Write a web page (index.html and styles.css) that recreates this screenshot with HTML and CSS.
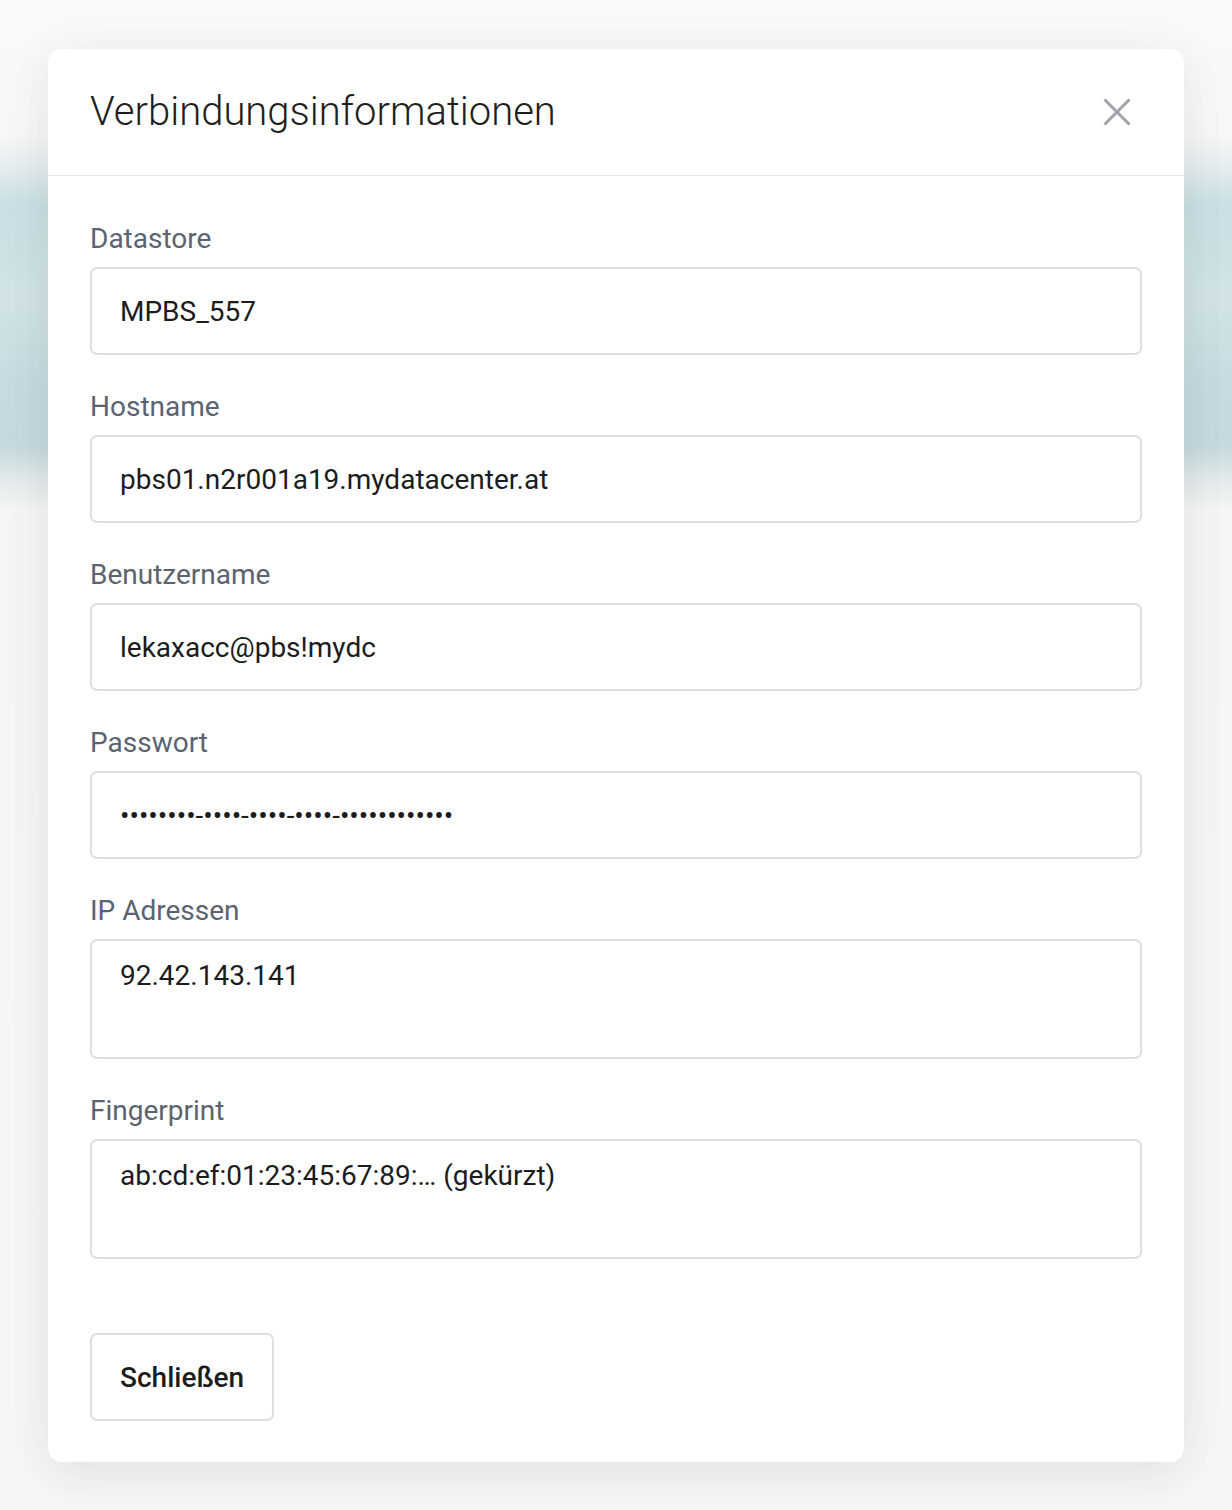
FILE: index.html
```html
<!DOCTYPE html>
<html lang="de">
<head>
<meta charset="utf-8">
<title>Verbindungsinformationen</title>
<link rel="stylesheet" href="styles.css">
</head>
<body>
<div class="modal" role="dialog" aria-labelledby="modal-title">
  <header class="modal-header">
    <h2 id="modal-title" class="modal-title">Verbindungsinformationen</h2>
    <button class="close-btn" type="button" aria-label="Schließen">
      <svg width="30" height="30" viewBox="0 0 30 30" aria-hidden="true">
        <path d="M2.5 2.5 L27.5 27.5 M27.5 2.5 L2.5 27.5" stroke="#a1a1aa" stroke-width="3" stroke-linecap="butt" fill="none"/>
      </svg>
    </button>
  </header>
  <div class="modal-body">
    <div class="field">
      <label class="field-label" for="f-ds">Datastore</label>
      <input class="field-input" id="f-ds" type="text" readonly value="MPBS_557">
    </div>
    <div class="field">
      <label class="field-label" for="f-host">Hostname</label>
      <input class="field-input" id="f-host" type="text" readonly value="pbs01.n2r001a19.mydatacenter.at">
    </div>
    <div class="field">
      <label class="field-label" for="f-user">Benutzername</label>
      <input class="field-input" id="f-user" type="text" readonly value="lekaxacc@pbs!mydc">
    </div>
    <div class="field">
      <label class="field-label" for="f-pw">Passwort</label>
      <input class="field-input" id="f-pw" type="text" readonly value="••••••••-••••-••••-••••-••••••••••••">
    </div>
    <div class="field">
      <label class="field-label" for="f-ip">IP Adressen</label>
      <textarea class="field-input field-area" id="f-ip" readonly>92.42.143.141</textarea>
    </div>
    <div class="field">
      <label class="field-label" for="f-fp">Fingerprint</label>
      <textarea class="field-input field-area" id="f-fp" readonly>ab:cd:ef:01:23:45:67:89:… (gekürzt)</textarea>
    </div>
  </div>
  <footer class="modal-footer">
    <button class="btn" type="button">Schließen</button>
  </footer>
</div>
</body>
</html>
```

FILE: styles.css
```css
* {
  box-sizing: border-box;
}

html, body {
  margin: 0;
  padding: 0;
}

body {
  width: 1232px;
  min-height: 1510px;
  font-family: Roboto, "Liberation Sans", Arial, sans-serif;
  color: #1c1c1e;
  background:
    linear-gradient(to bottom,
      #f9f9f9 0px,
      #f6f7f7 135px,
      #e3ecee 170px,
      #c9dfe3 205px,
      #d1e3e7 300px,
      #c6dbe0 380px,
      #c4d9de 445px,
      #e3eaeb 480px,
      #f4f5f5 510px,
      #f6f6f6 1510px);
  padding: 49px 48px 48px;
}

.modal {
  width: 1136px;
  background: #ffffff;
  border-radius: 14px;
  box-shadow: 0 16px 48px rgba(0, 0, 0, 0.06), 0 0 60px rgba(0, 0, 0, 0.03);
  overflow: hidden;
}

.modal-header {
  display: flex;
  align-items: center;
  justify-content: space-between;
  padding: 39px 52px 39px 42px;
  border-bottom: 1px solid #e9e9eb;
}

.modal-title {
  margin: 0;
  font-size: 40px;
  line-height: 48px;
  font-weight: 300;
  color: #1f1f21;
}

.close-btn {
  display: flex;
  align-items: center;
  justify-content: center;
  width: 30px;
  height: 30px;
  padding: 0;
  border: 0;
  background: transparent;
  cursor: pointer;
}

.modal-body {
  display: flex;
  flex-direction: column;
  gap: 34px;
  padding: 45px 42px 0;
}

.field {
  display: flex;
  flex-direction: column;
  gap: 10px;
}

.field-label {
  font-size: 28px;
  line-height: 36px;
  color: #5c6370;
  font-weight: 400;
}

.field-input {
  display: block;
  width: 100%;
  height: 88px;
  margin: 0;
  padding: 0 28px;
  font-family: inherit;
  font-size: 28px;
  line-height: 36px;
  color: #1c1c1e;
  background: #ffffff;
  border: 2px solid #dedee3;
  border-radius: 7px;
  outline: none;
}

.field-area {
  height: 120px;
  padding: 16px 28px 12px;
  line-height: 38px;
  resize: none;
  overflow: hidden;
}

.modal-footer {
  display: flex;
  padding: 74px 42px 41px;
}

.btn {
  height: 88px;
  padding: 0 28px;
  font-family: inherit;
  font-size: 28px;
  font-weight: 500;
  color: #1c1c1e;
  background: #ffffff;
  border: 2px solid #dedee3;
  border-radius: 7px;
  cursor: pointer;
}
```
